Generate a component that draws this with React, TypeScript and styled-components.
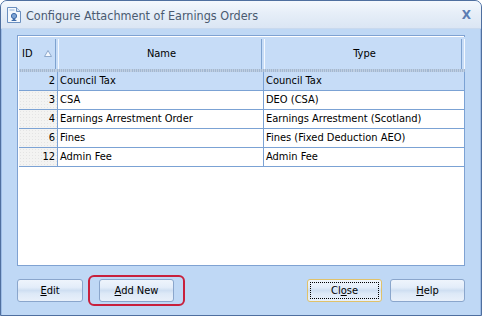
import React from "react";
import styled, { createGlobalStyle } from "styled-components";

const Global = createGlobalStyle`
  html, body { margin: 0; padding: 0; background: #ffffff; }
  body { width: 482px; height: 316px; overflow: hidden; }
  * { box-sizing: border-box; }
`;

const FONT = `Tahoma, "DejaVu Sans Condensed", "DejaVu Sans", sans-serif`;

const Window = styled.div`
  width: 482px;
  height: 316px;
  display: flex;
  flex-direction: column;
  background: #bfd8f5;
  border: 1px solid #4f6f9f;
  border-radius: 7px 7px 0 0;
  overflow: hidden;
  font-family: ${FONT};
`;

const TitleBar = styled.div`
  height: 28px;
  flex: none;
  display: flex;
  align-items: center;
  padding: 1px 8px 0 6px;
  background: linear-gradient(#f4f8fd 0%, #e6eef8 45%, #dbe6f4 100%);
  border-bottom: 1px solid #c9d9ee;
`;

const TitleText = styled.div`
  flex: 1;
  margin-left: 5px;
  font-size: 12.5px;
  color: #4a5a70;
  white-space: nowrap;
`;

const CloseX = styled.div`
  font-family: "DejaVu Sans", sans-serif;
  font-weight: bold;
  font-size: 12px;
  color: #5b7db3;
  margin-right: 2px;
`;

const Body = styled.div`
  flex: 1;
  display: flex;
  flex-direction: column;
  padding: 6px 15px 0 15px;
  border-left: 1px solid #9ebde6;
  border-right: 1px solid #9ebde6;
`;

const Panel = styled.div`
  height: 231px;
  background: #ffffff;
  border: 1px solid #7fa2d2;
  padding: 1px 1px 0 1px;
  display: flex;
  flex-direction: column;
`;

const HeaderRow = styled.div`
  display: flex;
  height: 35px;
  background: #c6dcf7;
  border-bottom: 3px solid transparent;
  border-image: repeating-linear-gradient(90deg, #a3b8d2 0 1px, #c0cfe1 1px 2px) 3;
`;

const HeaderCell = styled.div<{ $w?: number; $align?: string }>`
  ${(p) => (p.$w ? `width: ${p.$w}px; flex: none;` : `flex: 1;`)}
  display: flex;
  align-items: center;
  justify-content: ${(p) => p.$align || "center"};
  padding: 0 4px 0 3px;
  font-size: 11px;
  color: #000;
  position: relative;
  &::after {
    content: "";
    position: absolute;
    right: 0;
    top: 2px;
    bottom: 0;
    width: 2px;
    border-left: 1px solid #7ea2cf;
    border-right: 1px solid #f4f8fd;
  }
`;

const SortArrow = styled.svg`
  margin-left: auto;
  margin-right: 3px;
`;

const Row = styled.div<{ $sel?: boolean }>`
  display: flex;
  height: 19px;
  border-bottom: 1px solid #7ba2d4;
  background: ${(p) => (p.$sel ? "#c6dcf7" : "#ffffff")};
`;

const IdCell = styled.div<{ $sel?: boolean }>`
  width: 39px;
  flex: none;
  text-align: right;
  padding-right: 2px;
  font-size: 11px;
  line-height: 18px;
  border-right: 1px solid #7ba2d4;
  background: ${(p) =>
    p.$sel
      ? "#c6dcf7"
      : "radial-gradient(circle, #e4e4e4 0.6px, transparent 0.7px) 0 0/3px 3px, #f3f3f2"};
`;

const Cell = styled.div<{ $w?: number }>`
  ${(p) => (p.$w ? `width: ${p.$w}px; flex: none;` : `flex: 1;`)}
  padding-left: 2px;
  font-size: 11px;
  line-height: 18px;
  white-space: nowrap;
  border-right: 1px solid #7ba2d4;
`;

const TableBox = styled.div`
  width: 446px;
`;

const ButtonRow = styled.div`
  display: flex;
  align-items: center;
  margin-top: 9px;
  height: 31px;
`;

const Button = styled.button<{ $w: number; $focus?: boolean; $gap?: number }>`
  width: ${(p) => p.$w}px;
  height: 23px;
  flex: none;
  margin-left: ${(p) => p.$gap || 0}px;
  font-family: ${FONT};
  font-size: 11px;
  color: #000;
  border-radius: 3px;
  border: 1px solid ${(p) => (p.$focus ? "#e0c26a" : "#8aa6cc")};
  background: linear-gradient(#eef4fc 0%, #e3edf9 35%, #cfdff2 50%, #dde9f7 65%, #e8f0fa 100%);
  padding: 0;
  position: relative;
  u { text-decoration: underline; }
  ${(p) =>
    p.$focus
      ? `&::after { content: ""; position: absolute; inset: 2px; border: 1px dotted #000; }`
      : ""}
`;

const Highlight = styled.div`
  margin-left: 5px;
  border: 2px solid #c8203c;
  border-radius: 6px;
  padding: 2px 9px;
`;

const Spacer = styled.div`
  flex: 1;
`;

const rows = [
  { id: 2, name: "Council Tax", type: "Council Tax" },
  { id: 3, name: "CSA", type: "DEO (CSA)" },
  { id: 4, name: "Earnings Arrestment Order", type: "Earnings Arrestment (Scotland)" },
  { id: 6, name: "Fines", type: "Fines (Fixed Deduction AEO)" },
  { id: 12, name: "Admin Fee", type: "Admin Fee" },
];

function DocIcon() {
  return (
    <svg width="14" height="16" viewBox="0 0 14 16">
      <path d="M0.5 0.5 H9.5 L13.5 4.5 V15.5 H0.5 Z" fill="#f4f8fd" stroke="#6b8fbf" />
      <path d="M9.5 0.5 V4.5 H13.5" fill="#d5e3f3" stroke="#6b8fbf" />
      <line x1="2.5" y1="3" x2="7.5" y2="3" stroke="#8fb0d8" />
      <circle cx="7" cy="9" r="2.6" fill="#7ea5d6" stroke="#3e6aa8" />
      <path d="M4 14 L7 11.5 L10 14 Z" fill="#3e6aa8" />
    </svg>
  );
}

export default function App() {
  return (
    <>
      <Global />
      <Window>
        <TitleBar>
          <DocIcon />
          <TitleText>Configure Attachment of Earnings Orders</TitleText>
          <CloseX>X</CloseX>
        </TitleBar>
        <Body>
          <Panel>
            <TableBox>
              <HeaderRow>
                <HeaderCell $w={40} $align="flex-start">
                  ID
                  <SortArrow width="8" height="7" viewBox="0 0 8 7">
                    <path d="M4 0.5 L7.5 6.5 H0.5 Z" fill="#f4f7fc" stroke="#8ea9cc" />
                  </SortArrow>
                </HeaderCell>
                <HeaderCell $w={206}>Name</HeaderCell>
                <HeaderCell>Type</HeaderCell>
              </HeaderRow>
              {rows.map((r, i) => (
                <Row key={r.id} $sel={i === 0}>
                  <IdCell $sel={i === 0}>{r.id}</IdCell>
                  <Cell $w={206}>{r.name}</Cell>
                  <Cell>{r.type}</Cell>
                </Row>
              ))}
            </TableBox>
          </Panel>
          <ButtonRow>
            <Button $w={66}>
              <u>E</u>dit
            </Button>
            <Highlight>
              <Button $w={75}>
                <u>A</u>dd New
              </Button>
            </Highlight>
            <Spacer />
            <Button $w={75} $focus>
              Cl<u>o</u>se
            </Button>
            <Button $w={75} $gap={8}>
              <u>H</u>elp
            </Button>
          </ButtonRow>
        </Body>
      </Window>
    </>
  );
}
